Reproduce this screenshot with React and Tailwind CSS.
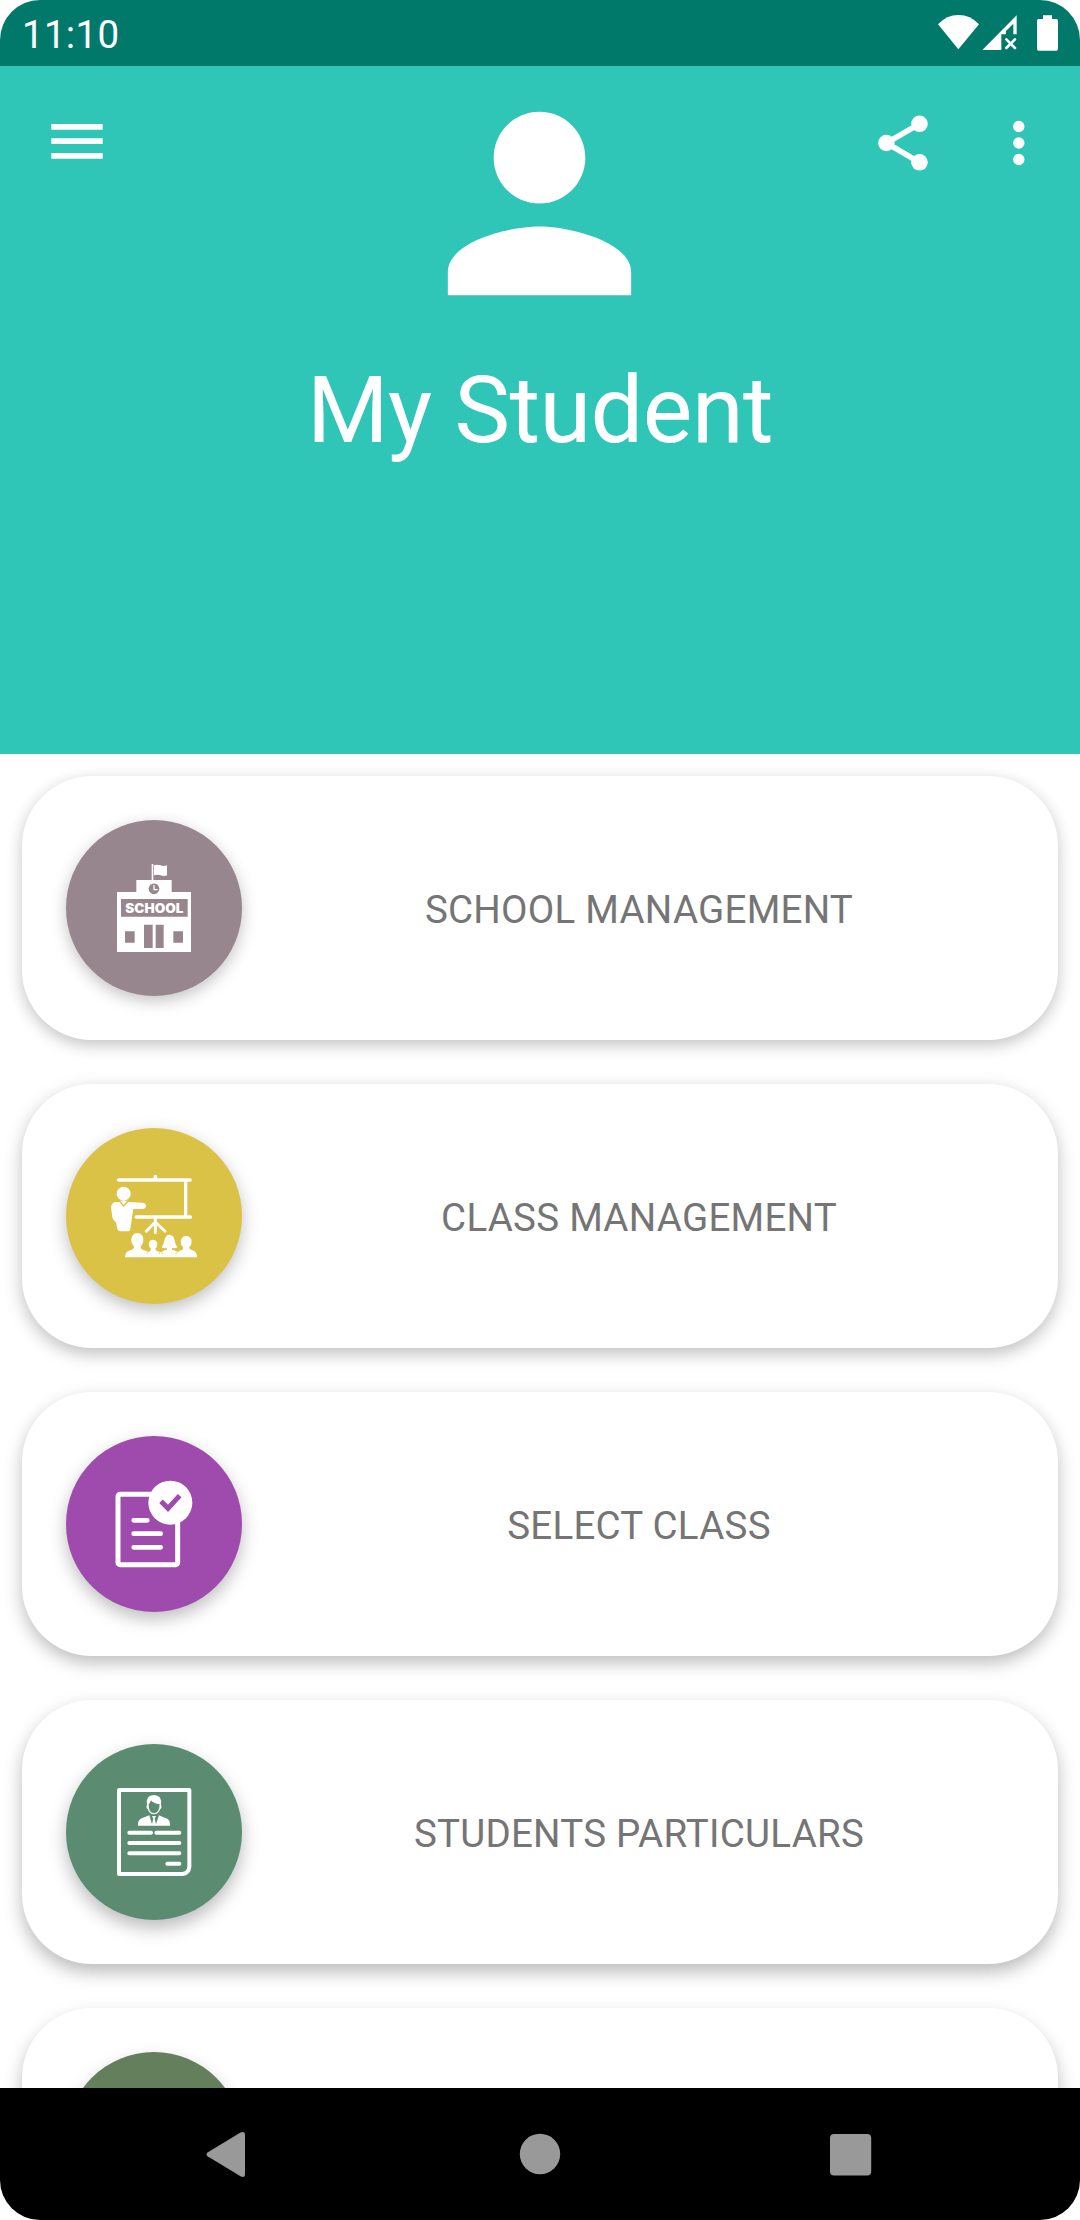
import React from "react";

function SchoolIcon() {
  return (
    <svg viewBox="-3 9 330 330" className="h-[110px] w-[110px]" fill="#fff">
      <path d="M155 42h5v50h-5z" />
      <path d="M162 46q10-4 19 0t20 0v30q-10 4-19 0t-20 0z" />
      <path
        fillRule="evenodd"
        d="M109 90H215V126H273V306H51V126H109ZM63 147V200H263V147ZM75 244V278H104V244ZM220 244V278H249V244ZM132 224V294H158V224ZM167 224V294H191V224ZM162 100.500a16 16 0 1 0 .01 0Z"
      />
      <path d="M162 106V119H173" fill="none" stroke="#fff" strokeWidth="4" />
      <text
        x="76"
        y="188.500"
        fontSize="38"
        textLength="174"
        lengthAdjust="spacingAndGlyphs"
        className="font-[Inter,sans-serif] font-black"
      >
        SCHOOL
      </text>
    </svg>
  );
}

function ClassIcon() {
  return (
    <svg viewBox="-3 3 330 330" className="h-[110px] w-[110px]" fill="#fff">
      <g stroke="#fff" strokeLinecap="round" fill="none">
        <path d="M56 60H270M109 171H271" strokeWidth="11" />
        <path d="M166 50V56" strokeWidth="11" />
        <path d="M257 62V170" strokeWidth="10" />
        <path d="M166 176V218M166 186L139 214M166 186L195 214" strokeWidth="8.500" />
      </g>
      <circle cx="71" cy="101" r="21" />
      <path
        fillRule="evenodd"
        d="M58 126H47Q34 128 33 142L37 172Q39 183 48 187L52 207Q54 214 62 214H82Q90 214 91 206L100 147H127Q138 146 138 137Q137 128 127 128L85 126L71 141Z"
      />
      <path d="M60 122H82L71 135Z" />
      <path d="M75 292V288Q77 275 91 271Q103 268 102 259Q93 250 94 237Q97 219 112 219Q129 220 130 237Q131 250 122 259Q121 268 132 271Q141 273 145 276Q153 273 153 266Q146 260 146 251Q148 239 159 239Q171 240 172 251Q172 261 166 266Q166 272 174 274L184 277Q188 271 201 269V264Q189 266 185 262Q192 252 194 238Q198 224 208 224Q220 225 223 238Q225 253 232 262Q226 266 216 264V269Q228 271 233 276Q238 271 247 269Q251 267 249 261Q242 255 242 244Q245 228 259 228Q274 229 275 244Q275 255 268 261Q267 268 277 271Q290 275 291 288V292Z" />
      <path d="M184 276L190 282M233 275L226 282M145 275L139 282M174 273L180 282" stroke="#dac247" strokeWidth="2" />
    </svg>
  );
}

function SelectIcon() {
  return (
    <svg viewBox="-3 12 330 330" className="h-[110px] w-[110px]" fill="none" stroke="#fff">
      <rect x="54" y="88" width="179" height="211" rx="6" strokeWidth="15" />
      <path d="M101 166H142M101 206H182M101 247H182" strokeWidth="14" strokeLinecap="round" />
      <circle cx="211" cy="113" r="66" fill="#fff" stroke="none" />
      <path d="M183 109L204 130L239 92" stroke="#9f4bae" strokeWidth="15" />
    </svg>
  );
}

function ParticularsIcon() {
  return (
    <svg viewBox="-3 6 330 330" className="h-[110px] w-[110px]" fill="#fff">
      <path
        d="M57 45H268V276Q266 295 247 297H57Z"
        fill="none"
        stroke="#fff"
        strokeWidth="12"
        strokeLinejoin="round"
      />
      <path
        d="M88 173H153M169 173H238M88 204H238M88 235H238M202 266H238"
        stroke="#fff"
        strokeWidth="12"
        strokeLinecap="round"
      />
      <path
        fillRule="evenodd"
        d="M141 90Q136 60 162 60Q187 60 183 90Q187 98 181 102Q175 118 162 118Q148 118 143 102Q137 98 141 90ZM146 88Q145 114 162 115Q178 114 179 88Q160 85 153 76Q150 84 146 88Z"
      />
      <path d="M114 152V144Q116 132 129 128L148 121L156 148L160 131L156 123H168L164 131L168 148L177 121L194 128Q208 131 210 144V152Z" />
    </svg>
  );
}

const items = [
  {
    label: "SCHOOL MANAGEMENT",
    color: "bg-[#97868d]",
    shadow: "shadow-[0_5px_16px_rgba(0,0,0,0.24)]",
    Icon: SchoolIcon,
  },
  {
    label: "CLASS MANAGEMENT",
    color: "bg-[#dac247]",
    shadow: "shadow-[0_6px_17px_rgba(0,0,0,0.25)]",
    Icon: ClassIcon,
  },
  {
    label: "SELECT CLASS",
    color: "bg-[#9f4bae]",
    shadow: "shadow-[0_7px_17px_rgba(0,0,0,0.26)]",
    Icon: SelectIcon,
  },
  {
    label: "STUDENTS PARTICULARS",
    color: "bg-[#5b8c71]",
    shadow: "shadow-[0_8px_18px_rgba(0,0,0,0.27)]",
    Icon: ParticularsIcon,
  },
  { label: "", color: "bg-[#647f5b]", shadow: "shadow-[0_9px_18px_rgba(0,0,0,0.27)]", Icon: null },
];

function MenuCard({ label, color, shadow, Icon }) {
  return (
    <button
      className={`flex h-[264px] w-full shrink-0 items-center rounded-[70px] bg-white px-11 ${shadow}`}
    >
      <span
        className={`flex h-44 w-44 shrink-0 items-center justify-center rounded-full ${color} ${shadow}`}
      >
        {Icon && <Icon />}
      </span>
      <span className="ml-[22px] flex-1 pt-[3px] text-center text-[38.5px] leading-[46px] tracking-[0.25px] whitespace-nowrap text-[#757575]">
        {label}
      </span>
    </button>
  );
}

function StatusBar() {
  return (
    <div className="flex h-[66px] shrink-0 items-center justify-between bg-[#00796b] pl-[22px]">
      <span className="pt-[3px] text-[38.5px] leading-[46px] tracking-[0.3px]">11:10</span>
      <svg viewBox="280 0 440 198" className="h-[66px] w-[147px]" fill="#fff" preserveAspectRatio="xMaxYMid meet">
        <path d="M355 148L294 73Q320 45 355.500 45T417 73Z" />
        <path d="M427 150L530 46V103H520V71L498 93V103H484V150Z" />
        <path d="M499 118L525 144M525 118L499 144" stroke="#fff" strokeWidth="8" strokeLinecap="round" />
        <path d="M609 46H636V57H649Q654 57 654 62V147Q654 152 649 152H596Q591 152 591 147V62Q591 57 596 57H609Z" />
      </svg>
    </div>
  );
}

function Header() {
  return (
    <header className="flex h-[688px] shrink-0 flex-col items-center bg-[#2fc5b7]">
      <div className="flex h-[275px] w-full items-start justify-between">
        <svg viewBox="0 0 154 154" className="h-[154px] w-[402px]" fill="#fff" preserveAspectRatio="xMinYMin meet">
          <path d="M51.300 58h51.400v5.700H51.300zM51.300 72.200h51.400v5.700H51.300zM51.300 87h51.400v5.800H51.300z" />
        </svg>
        <svg viewBox="0 0 24 24" className="h-[275px] w-[275px]" fill="#fff">
          <path d="M12 12c2.210 0 4-1.790 4-4s-1.790-4-4-4-4 1.790-4 4 1.790 4 4 4zm0 2c-2.670 0-8 1.340-8 4v2h16v-2c0-2.660-5.330-4-8-4z" />
        </svg>
        <svg viewBox="677 66 403 154" className="h-[154px] w-[403px]" fill="#fff">
          <path d="M919.500 123.800L886.400 143L919.500 162.300" fill="none" stroke="#fff" strokeWidth="5.600" />
          <circle cx="919.500" cy="123.800" r="8.300" />
          <circle cx="886.400" cy="143" r="8.300" />
          <circle cx="919.500" cy="162.300" r="8.300" />
          <circle cx="1018.800" cy="126.500" r="5.700" />
          <circle cx="1018.800" cy="143" r="5.700" />
          <circle cx="1018.800" cy="159.500" r="5.700" />
        </svg>
      </div>
      <h1 className="mt-[14px] text-[93.500px] leading-[110px] tracking-[-0.5px]">My Student</h1>
    </header>
  );
}

function NavBar() {
  return (
    <nav className="flex h-[132px] shrink-0 bg-black">
      <svg viewBox="0 2088 1080 132" className="h-[132px] w-[1080px]" fill="#999">
        <path d="M207.500 2152.500L240.500 2132.500Q245 2130.500 245 2135V2174Q245 2178.500 240.500 2176.200L207.500 2156.200Q205.500 2154.300 207.500 2152.500Z" />
        <circle cx="540" cy="2154" r="20.200" />
        <rect x="830" y="2134" width="41.200" height="41.500" rx="4" />
      </svg>
    </nav>
  );
}

export default function App() {
  return (
    <div className="h-[2220px] w-[1080px] bg-white">
      <div className="flex h-full w-full flex-col overflow-hidden rounded-[40px] bg-white font-[Roboto,sans-serif] text-white">
        <StatusBar />
        <Header />
        <main className="flex min-h-0 flex-1 flex-col gap-11 overflow-hidden px-[22px] pt-[22px]">
          {items.map((item) => (
            <MenuCard key={item.color} {...item} />
          ))}
        </main>
        <NavBar />
      </div>
    </div>
  );
}
